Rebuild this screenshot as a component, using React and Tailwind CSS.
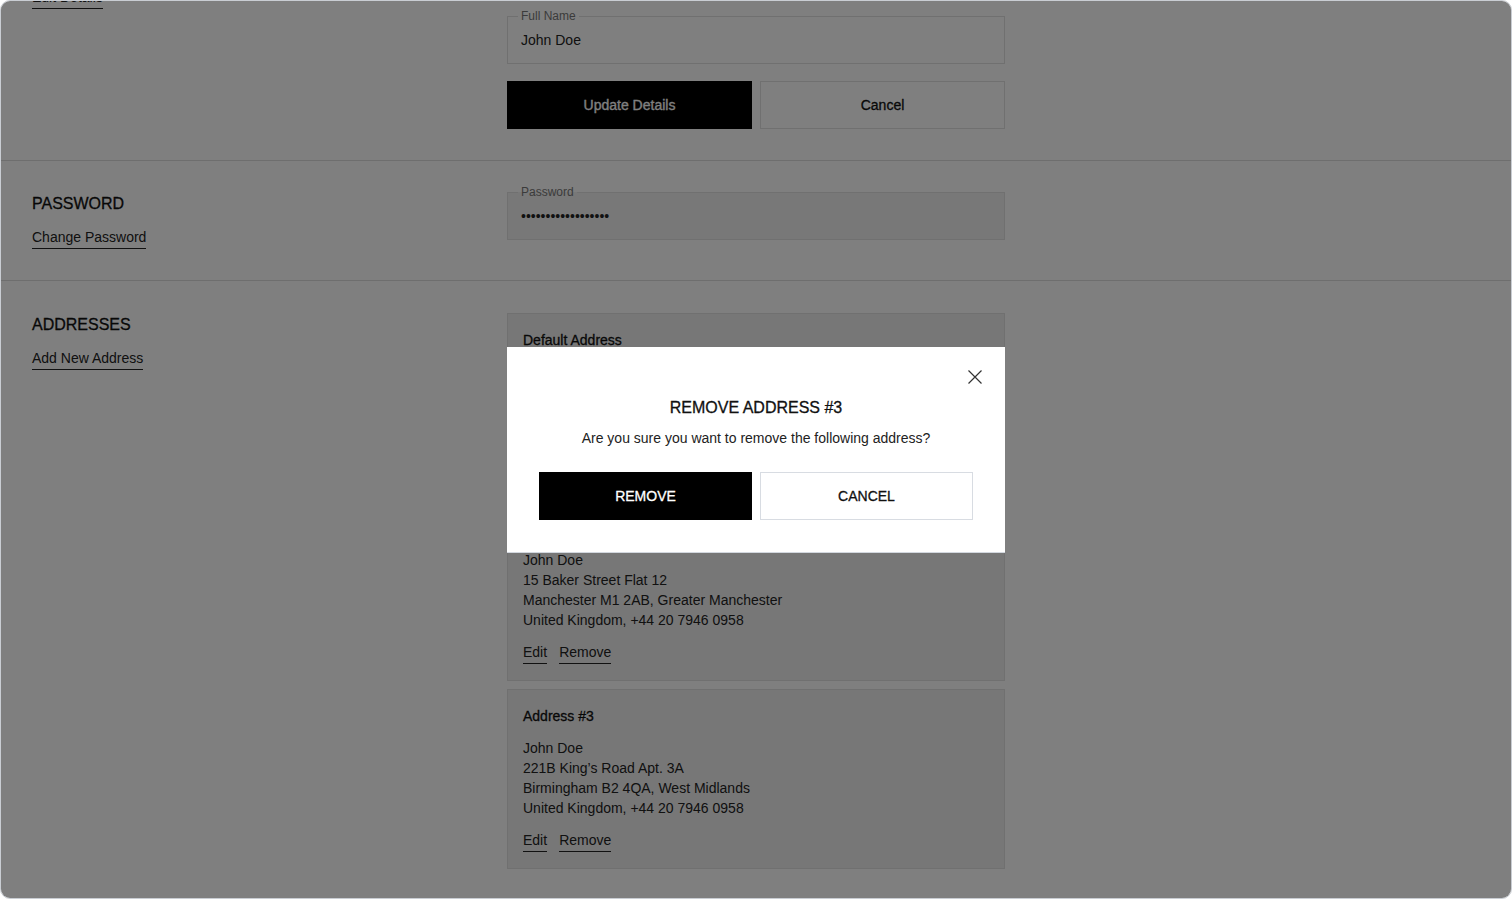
import { useState } from "react";

const addresses = [
    {
        title: "Default Address",
        lines: ["John Doe", "10 Oxford Street Suite 4", "London W1D 1BS, Greater London", "United Kingdom, +44 20 7946 0958"],
    },
    {
        title: "Address #2",
        lines: ["John Doe", "15 Baker Street Flat 12", "Manchester M1 2AB, Greater Manchester", "United Kingdom, +44 20 7946 0958"],
    },
    {
        title: "Address #3",
        lines: ["John Doe", "221B King’s Road Apt. 3A", "Birmingham B2 4QA, West Midlands", "United Kingdom, +44 20 7946 0958"],
    },
];

// medium weight look (Liberation Sans has no 500)
const medium = "[-webkit-text-stroke:0.3px_currentColor]";

const Field = ({ label, value, type = "text", disabled }) => (
    <div className={`relative h-12 border border-[#e0e0e0] ${disabled ? "bg-[#f0f0f0]" : "bg-white"}`}>
        <span
            className={`absolute left-[10px] -top-[8px] px-[3px] text-xs leading-[14px] text-[#777] ${
                disabled ? "bg-[linear-gradient(to_bottom,#ffffff_50%,#f0f0f0_50%)]" : "bg-white"
            }`}
        >
            {label}
        </span>
        <input
            type={type}
            value={value}
            readOnly
            disabled={disabled}
            className="h-full w-full bg-transparent px-[13px] text-sm text-[#222] outline-none"
        />
    </div>
);

const TextLink = ({ children }) => (
    <button className="block border-b border-[#222] pb-px text-sm leading-5 text-[#222] cursor-pointer">
        {children}
    </button>
);

const SectionTitle = ({ title, link }) => (
    <div className="flex flex-col items-start">
        <h2 className={`text-base leading-6 text-[#111] uppercase ${medium}`}>{title}</h2>
        <div className="mt-[11px] flex">
            <TextLink>{link}</TextLink>
        </div>
    </div>
);

const AddressCard = ({ address }) => (
    <div className="border border-[#e0e0e0] bg-[#efefef] px-[15px] py-4 text-sm leading-5 text-[#222]">
        <p className={`text-[#111] ${medium}`}>{address.title}</p>
        <div className="mt-3">
            {address.lines.map((line) => (
                <p key={line}>{line}</p>
            ))}
        </div>
        <div className="mt-3 flex gap-3">
            <TextLink>Edit</TextLink>
            <TextLink>Remove</TextLink>
        </div>
    </div>
);

const App = () => {
    const [open, setOpen] = useState(true);

    return (
        <div className="h-[899px] w-full bg-white">
            <div
                className="relative h-full w-full overflow-hidden rounded-[10px] border border-[#c9cdd3] bg-white"
                style={{ fontFamily: '"Liberation Sans", Arial, sans-serif' }}
            >
                {/* page, scrolled down a bit */}
                <div className="-mt-[81px]">
                    {/* Personal details */}
                    <section className="grid grid-cols-[1fr_498px_1fr] px-[31px] pt-8 pb-[31px]">
                        <SectionTitle title="Personal Details" link="Edit Details" />
                        <div className="flex flex-col gap-4">
                            <Field label="Email" value="john.doe@example.com" />
                            <Field label="Full Name" value="John Doe" />
                            <div className="mt-px grid grid-cols-2 gap-2">
                                <button className={`h-12 bg-black text-sm text-white cursor-pointer ${medium}`}>
                                    Update Details
                                </button>
                                <button className={`h-12 border border-[#e0e0e0] bg-white text-sm text-[#111] cursor-pointer ${medium}`}>
                                    Cancel
                                </button>
                            </div>
                        </div>
                    </section>

                    {/* Password */}
                    <section className="grid grid-cols-[1fr_498px_1fr] border-t border-[#dddddd] px-[31px] pt-[31px] pb-[31px]">
                        <SectionTitle title="Password" link="Change Password" />
                        <div>
                            <Field label="Password" value="supersecretpass123" type="password" disabled />
                        </div>
                    </section>

                    {/* Addresses */}
                    <section className="grid grid-cols-[1fr_498px_1fr] border-t border-[#dddddd] px-[31px] pt-8 pb-8">
                        <SectionTitle title="Addresses" link="Add New Address" />
                        <div className="flex flex-col gap-2">
                            {addresses.map((a) => (
                                <AddressCard key={a.title} address={a} />
                            ))}
                        </div>
                    </section>
                </div>

                {/* Remove address modal */}
                {open && (
                    <div className="absolute inset-0 flex items-center justify-center bg-black/50">
                        <div className="relative w-[498px] border-b border-[#d3d8df] bg-white px-8 pt-[49px] pb-8 text-center">
                            <button
                                onClick={() => setOpen(false)}
                                className="absolute top-[23px] right-[23px] cursor-pointer"
                            >
                                <svg width="14" height="14" viewBox="0 0 14 14" fill="none">
                                    <path d="M0.5 0.5L13.5 13.5M13.5 0.5L0.5 13.5" stroke="#333" strokeWidth="1.2" />
                                </svg>
                            </button>
                            <h3 className={`text-base leading-6 text-[#111] ${medium}`}>REMOVE ADDRESS #3</h3>
                            <p className="mt-2 text-sm leading-5 text-[#222]">
                                Are you sure you want to remove the following address?
                            </p>
                            <div className="mt-6 grid grid-cols-2 gap-2">
                                <button className={`h-12 bg-black text-sm text-white cursor-pointer ${medium}`}>
                                    REMOVE
                                </button>
                                <button
                                    onClick={() => setOpen(false)}
                                    className={`h-12 border border-[#d8dce2] bg-white text-sm text-[#111] cursor-pointer ${medium}`}
                                >
                                    CANCEL
                                </button>
                            </div>
                        </div>
                    </div>
                )}
            </div>
        </div>
    );
};

export default App;
